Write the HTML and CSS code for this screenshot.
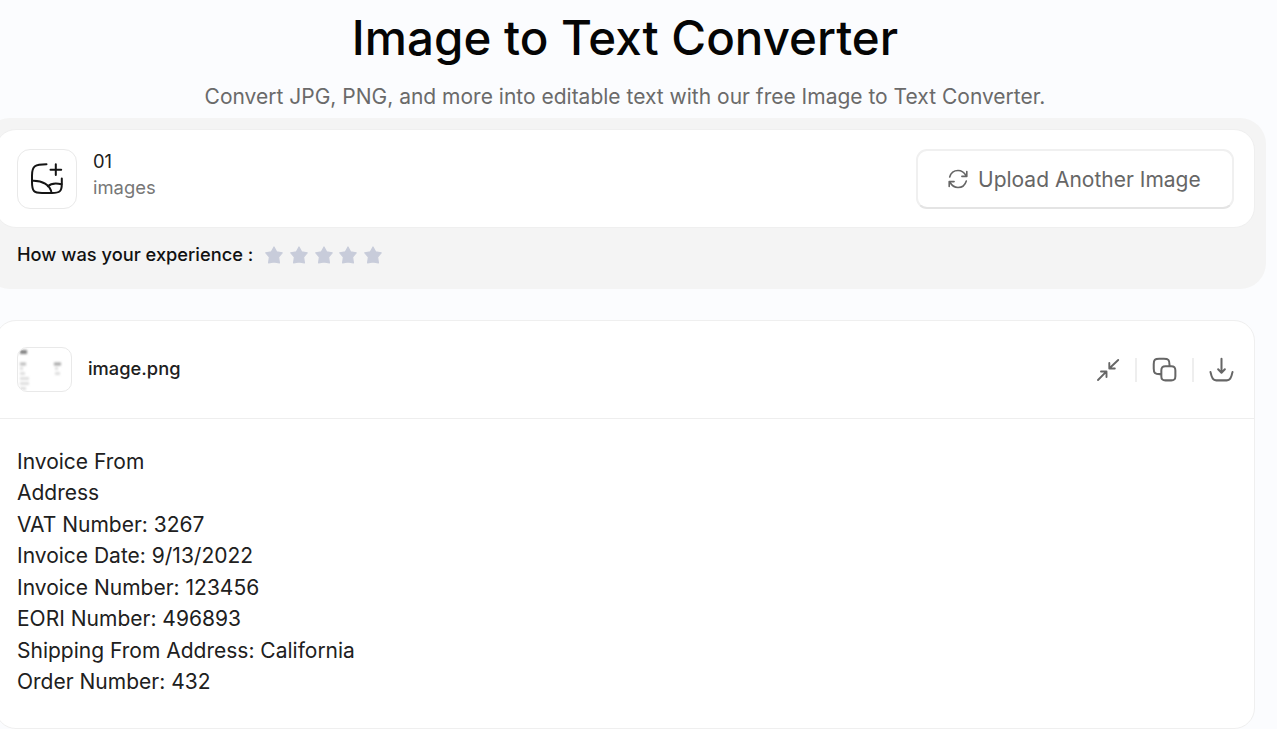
FILE: index.html
```html
<!DOCTYPE html>
<html lang="en">
<head>
<meta charset="utf-8">
<title>Image to Text Converter</title>
<link rel="stylesheet" href="styles.css">
</head>
<body>
<main class="page">
  <header class="hero">
    <h1 class="title"><span>Image to Text Converter</span></h1>
    <p class="subtitle"><span>Convert JPG, PNG, and more into editable text with our free Image to Text Converter.</span></p>
  </header>

  <section class="panel">
    <div class="upload-card">
      <div class="icon-box">
        <svg width="34" height="34" viewBox="0 0 34 34" fill="none" stroke="#151515" stroke-width="2" stroke-linecap="round" stroke-linejoin="round">
          <path d="M16.500 2.200C5 2.200 2 4 2 13.500V20C2 29.500 4 31 12 31H22C30 31 31.800 29 31.800 22V16.500"/>
          <path d="M25.800 2.300V13M20.500 7.700H31.200"/>
          <path d="M2 18.800C12 18.300 20.500 22.500 21.500 31M17.800 24.300C21 21.200 26 20.800 31.500 22.200"/>
        </svg>
      </div>
      <div class="count"><span class="count-num">01</span><span class="count-label">images</span></div>
      <button class="upload-btn">
        <svg width="22" height="22" viewBox="0 0 22 22" fill="none" stroke="#666" stroke-width="1.600" stroke-linecap="round" stroke-linejoin="round">
          <path d="M2.700 9C4 4.500 7.500 2.500 11 2.500C14.500 2.500 17.300 4.500 19.200 8"/>
          <path d="M19.300 13C18 17.500 14.500 19.500 11 19.500C7.500 19.500 4.700 17.500 2.800 14"/>
          <path d="M19.800 3.500V8.400H14.900M2.200 18.500V13.600H7.100"/>
        </svg>
        <span class="upload-text">Upload Another Image</span>
      </button>
    </div>
    <div class="rating">
      <span class="rating-label">How was your experience :</span>
      <div class="stars">
        <svg class="star" viewBox="0 0 20 20"><path d="M10 2L12.600 6.800L18.200 7.800L14.600 12L15.400 18L10 16.900L4.600 18L5.400 12L1.800 7.800L7.400 6.800Z"/></svg>
        <svg class="star" viewBox="0 0 20 20"><path d="M10 2L12.600 6.800L18.200 7.800L14.600 12L15.400 18L10 16.900L4.600 18L5.400 12L1.800 7.800L7.400 6.800Z"/></svg>
        <svg class="star" viewBox="0 0 20 20"><path d="M10 2L12.600 6.800L18.200 7.800L14.600 12L15.400 18L10 16.900L4.600 18L5.400 12L1.800 7.800L7.400 6.800Z"/></svg>
        <svg class="star" viewBox="0 0 20 20"><path d="M10 2L12.600 6.800L18.200 7.800L14.600 12L15.400 18L10 16.900L4.600 18L5.400 12L1.800 7.800L7.400 6.800Z"/></svg>
        <svg class="star" viewBox="0 0 20 20"><path d="M10 2L12.600 6.800L18.200 7.800L14.600 12L15.400 18L10 16.900L4.600 18L5.400 12L1.800 7.800L7.400 6.800Z"/></svg>
      </div>
    </div>
  </section>

  <section class="result">
    <div class="result-head">
      <div class="thumb">
        <svg width="53" height="43" viewBox="0 0 53 43">
          <defs><filter id="soft" x="-10%" y="-10%" width="120%" height="120%"><feGaussianBlur stdDeviation="0.9"/></filter></defs>
          <g filter="url(#soft)">
            <rect x="2" y="2" width="7" height="4" fill="#858585"/>
            <rect x="2" y="14.500" width="6" height="3" fill="#bcbcbc"/>
            <rect x="36" y="14.500" width="7" height="3" fill="#a5a5a5"/>
            <path d="M2 19h3v3H2zM2 24h5v3H2zM2 29h9v3H2zM2 34h9v3H2zM2 39h6v3H2zM37 19h3v3h-3zM37 24h5v3h-5z" fill="#dfdfdf"/>
          </g>
        </svg>
      </div>
      <span class="file-name">image.png</span>
      <div class="actions">
        <svg width="24" height="24" viewBox="0 0 24 24" fill="none" stroke="#666" stroke-width="1.900" stroke-linecap="round" stroke-linejoin="round">
          <path d="M22.200 2L14 9.800M13.300 5V10.500H18.800M2 22L9.800 14.200M5 13.500H10.500V19"/>
        </svg>
        <i class="divider"></i>
        <svg width="25" height="25" viewBox="0 0 26 26" fill="none" stroke="#666" stroke-width="2.100" stroke-linejoin="round">
          <path d="M9.700 17.800H8C3 17.800 1.800 16.500 1.800 12V7.500C1.800 2.800 3 1.800 7.500 1.800H12.300C17 1.800 18.200 3 18.200 8V9.700"/>
          <path d="M14 9.700H20C23.300 9.700 24.300 10.700 24.300 14V20C24.300 23.300 23.300 24.300 20 24.300H14C10.700 24.300 9.700 23.300 9.700 20V14C9.700 10.700 10.700 9.700 14 9.700Z"/>
        </svg>
        <i class="divider"></i>
        <svg width="25" height="25" viewBox="0 0 26 26" fill="none" stroke="#666" stroke-width="2.100" stroke-linecap="round" stroke-linejoin="round">
          <path d="M13 1.700V16M9.500 12.800L13 16.300L16.500 12.800"/>
          <path d="M1.500 15.500C3 22.500 4.500 24.300 7.500 24.300H18.500C21.500 24.300 23 22.500 24.500 15.500"/>
        </svg>
      </div>
    </div>
    <div class="result-body">
      <p>Invoice From</p>
      <p>Address</p>
      <p>VAT Number: 3267</p>
      <p>Invoice Date: 9/13/2022</p>
      <p>Invoice Number: 123456</p>
      <p>EORI Number: 496893</p>
      <p>Shipping From Address: California</p>
      <p>Order Number: 432</p>
    </div>
  </section>
</main>
</body>
</html>
```
FILE: styles.css
```css
* { box-sizing: border-box; }
body {
  margin: 0;
  height: 729px;
  overflow: hidden;
  background: #fbfcfe;
  font-family: Inter, "Liberation Sans", sans-serif;
  color: #202020;
}
h1, p { margin: 0; }
svg { display: block; flex: none; }
.page { width: 1282px; margin-left: -16px; }
.hero { height: 118px; text-align: center; }
.title {
  height: 76px;
  line-height: 76px;
  font-size: 47.500px;
  font-weight: 500;
  color: #050505;
}
.subtitle { height: 42px; line-height: 42px; font-size: 21px; color: #6a6a6a; }
.panel {
  height: 171px;
  padding: 11px 11px 0;
  border-radius: 26px;
  background: #f4f4f4;
}
.upload-card {
  display: flex;
  align-items: center;
  height: 99px;
  padding: 0 20px 0 21px;
  border: 1px solid #efefef;
  border-radius: 21px;
  background: #fff;
}
.icon-box {
  display: flex;
  align-items: center;
  justify-content: center;
  width: 60px;
  height: 60px;
  border: 1px solid #e9e9e9;
  border-radius: 13px;
}
.count {
  display: flex;
  flex-direction: column;
  margin: -10px 0 0 16px;
  font-size: 18.400px;
  line-height: 26px;
}
.count-label { color: #777; }
.upload-btn {
  display: flex;
  align-items: center;
  gap: 9px;
  width: 318px;
  height: 60px;
  margin-left: auto;
  padding: 0 0 0 29px;
  border: 2px solid #f0f0f0;
  border-bottom-color: #e4e4e4;
  border-radius: 11px;
  background: #fff;
  font: 400 21px Inter, "Liberation Sans", sans-serif;
  color: #666;
}
.upload-text { padding-top: 2px; }
.rating { display: flex; align-items: center; height: 54px; padding-left: 22px; }
.rating-label { width: 247px; padding-bottom: 2px; font-size: 18.250px; font-weight: 500; color: #111; white-space: nowrap; }
.stars { display: flex; gap: 4.800px; }
.star { width: 20px; height: 20px; fill: #c8ccda; stroke: #c8ccda; stroke-width: 1.200; stroke-linejoin: round; }
.result {
  width: 1260px;
  height: 409px;
  margin: 31px 0 0 11px;
  border: 1px solid #efefef;
  border-radius: 21px;
  background: #fff;
}
.result-head {
  display: flex;
  align-items: center;
  height: 98px;
  padding: 0 20px 0 21px;
  border-bottom: 1px solid #eee;
}
.thumb {
  width: 55px;
  height: 45px;
  border: 1px solid #e9e9e9;
  border-radius: 10px;
  overflow: hidden;
}
.file-name { margin-left: 16px; padding-bottom: 3px; font-size: 18.300px; font-weight: 500; }
.actions { display: flex; align-items: center; gap: 15px; margin-left: auto; }
.divider { width: 2px; height: 24px; background: #eee; }
.result-body { padding: 26.500px 21px; font-size: 21px; line-height: 31.500px; }
```
